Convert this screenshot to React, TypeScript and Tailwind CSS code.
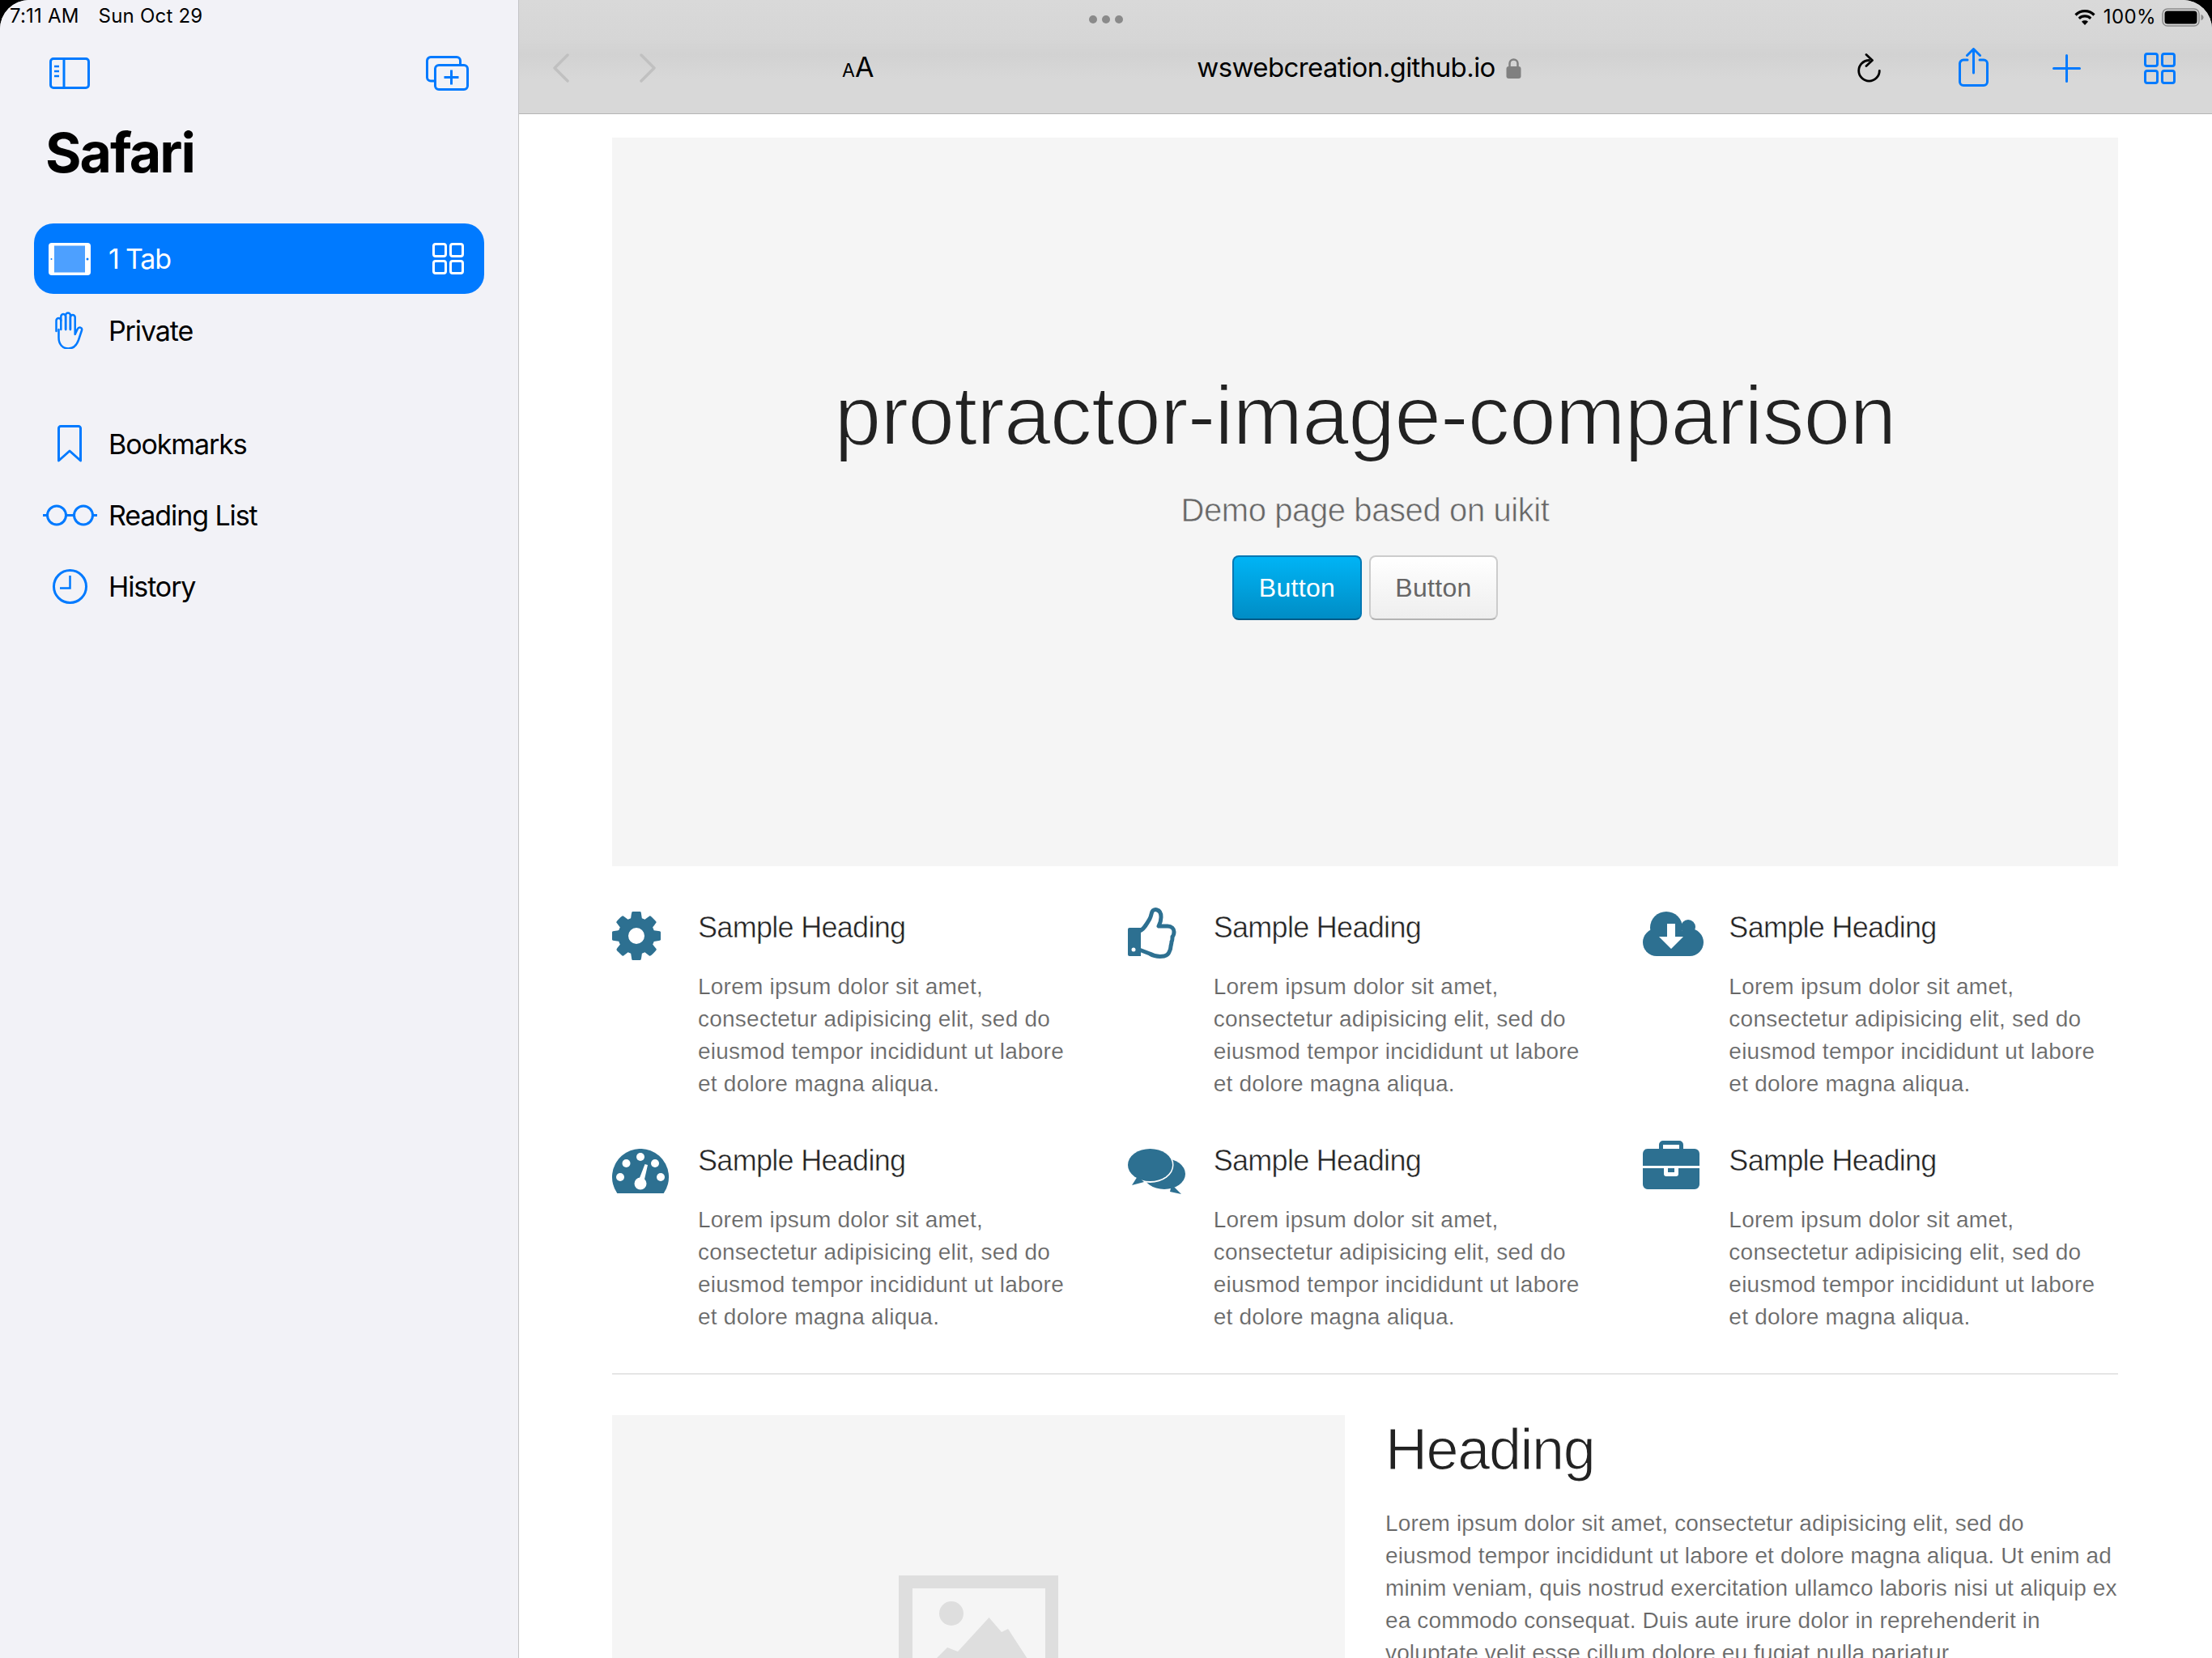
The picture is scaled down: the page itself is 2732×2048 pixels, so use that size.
const BLUE = "#007aff";

const sans = "[font-family:Inter,sans-serif]";

function TabsIcon({ className, color }: { className: string; color: string }) {
  return (
    <svg viewBox="0 0 39 39" className={className} fill="none" stroke={color} strokeWidth="3">
      <rect x="1.5" y="1.5" width="15" height="15" rx="2.5" />
      <rect x="22.5" y="1.5" width="15" height="15" rx="2.5" />
      <rect x="1.5" y="22.5" width="15" height="15" rx="2.5" />
      <rect x="22.5" y="22.5" width="15" height="15" rx="2.5" />
    </svg>
  );
}

function Sidebar() {
  return (
    <aside className={`w-[641px] shrink-0 bg-[#f2f2f7] border-r border-[#c4c4c6] flex flex-col ${sans}`}>
      <div className="h-[40px] pl-[12px] flex items-center gap-[24px] text-[24px] tracking-[0.2px] text-black leading-none">
        <span>7:11 AM</span>
        <span>Sun Oct 29</span>
      </div>
      <div className="h-[91px] flex items-start justify-between pl-[61px] pr-[61px] pt-[31px]">
        <svg viewBox="0 0 50 39" className="w-[50px] h-[39px]" fill="none" stroke={BLUE} strokeWidth="3">
          <rect x="1.5" y="1.5" width="47" height="36" rx="3.5" />
          <path d="M18 1.5v36" />
          <path d="M6 11h6M6 17h6M6 23h6" strokeWidth="2.5" />
        </svg>
        <svg viewBox="0 0 53 43" className="w-[53px] h-[43px] -mt-[2px]" fill="none" stroke={BLUE} strokeWidth="3">
          <path d="M10 31H6a4.500 4.500 0 0 1-4.500-4.500V6A4.500 4.500 0 0 1 6 1.500h32A4.500 4.500 0 0 1 42.500 6v4" />
          <rect x="11.500" y="11.500" width="40" height="30" rx="4.500" />
          <path d="M31.500 17.500v18M22.500 26.500h18" />
        </svg>
      </div>
      <h1 className="pl-[56px] h-[145px] text-[68px] font-bold leading-[90px] pt-[12px] tracking-[-2px] text-black">Safari</h1>
      <div className="mx-[42px] h-[87px] rounded-[24px] bg-[#007aff] flex items-center pl-[18px] pr-[25px] text-white text-[34px] tracking-[-1.2px]">
        <svg viewBox="0 0 52 40" className="w-[52px] h-[40px] shrink-0">
          <rect x="0" y="0" width="52" height="40" rx="4" fill="#fff" />
          <rect x="7" y="3.500" width="38" height="33" fill="#4da0ff" />
          <circle cx="48" cy="20" r="1.500" fill="#007aff" />
          <circle cx="3.500" cy="20" r="1" fill="#007aff" />
        </svg>
        <span className="ml-[22px] flex-1">1 Tab</span>
        <TabsIcon className="w-[39px] h-[39px]" color="#fff" />
      </div>
      <div className="mt-[1px]">
        <NavRow label="Private">
          <svg viewBox="0 0 36 46" className="w-[36px] h-[46px]" fill="none" stroke={BLUE} strokeWidth="2.500" strokeLinecap="round" strokeLinejoin="round">
            <path d="M1.500 24V11a2.900 2.900 0 0 1 5.800 0" />
            <path d="M7.300 22V6a2.900 2.900 0 0 1 5.800 0v16" />
            <path d="M13.100 22V4.400a2.900 2.900 0 0 1 5.800 0V22" />
            <path d="M18.900 22V7a2.900 2.900 0 0 1 5.800 0v21l3-6.500c1.800-3.500 6.300-2 5.300 1.500l-4 12c-2.500 7-6.500 10.500-12.500 10.500-7.500 0-12-5.500-12-13.500V22" />
          </svg>
        </NavRow>
      </div>
      <div className="mt-[52px]">
        <NavRow label="Bookmarks">
          <svg viewBox="0 0 30 46" className="w-[30px] h-[46px]" fill="none" stroke={BLUE} strokeWidth="3">
            <path d="M1.500 44V4a2.500 2.500 0 0 1 2.500-2.500h22a2.500 2.500 0 0 1 2.500 2.500v40L15 32z" strokeLinejoin="round" />
          </svg>
        </NavRow>
        <NavRow label="Reading List">
          <svg viewBox="0 0 67 27" className="w-[67px] h-[27px]" fill="none" stroke={BLUE} strokeWidth="3">
            <circle cx="17" cy="13.500" r="11.500" />
            <circle cx="50" cy="13.500" r="11.500" />
            <path d="M28.500 13.500h10M0 13.500h5.500M61.500 13.500H67" />
          </svg>
        </NavRow>
        <NavRow label="History">
          <svg viewBox="0 0 43 43" className="w-[43px] h-[43px]" fill="none" stroke={BLUE} strokeWidth="3">
            <circle cx="21.500" cy="21.500" r="20" />
            <path d="M21.500 8v15.500H9" strokeWidth="2.500" />
          </svg>
        </NavRow>
      </div>
    </aside>
  );
}

function NavRow({ label, children }: { label: string; children: React.ReactNode }) {
  return (
    <div className="h-[88px] ml-[42px] flex items-center text-[34px] tracking-[-1.1px] text-black">
      <div className="w-[88px] mr-[4px] flex justify-center">{children}</div>
      {label}
    </div>
  );
}

function Toolbar() {
  return (
    <header
      className={`h-[141px] shrink-0 border-b border-[#b4b4b4] bg-[linear-gradient(180deg,#d9d9d9_0%,#d6d6d6_35%,#d2d2d2_48%,#d8d8d8_70%,#d8d8d8_100%)] ${sans}`}
    >
      <div className="h-[48px] flex items-center relative">
        <div className="flex gap-[6px] pl-[704px]">
          <span className="w-[10px] h-[10px] rounded-full bg-[#8a8a8a]" />
          <span className="w-[10px] h-[10px] rounded-full bg-[#8a8a8a]" />
          <span className="w-[10px] h-[10px] rounded-full bg-[#8a8a8a]" />
        </div>
        <div className="absolute right-[10px] top-[9px] flex items-center text-[24px] tracking-[0.4px] leading-none text-black">
          <svg viewBox="0 0 26 20" className="w-[26px] h-[20px] mr-[10px]" fill="none" stroke="#000">
            <path d="M1.500 7.500C8 1 18 1 24.500 7.500" strokeWidth="3.200" />
            <path d="M5.800 11.800c4-3.800 10.400-3.800 14.400 0" strokeWidth="3.200" />
            <path d="M13 20l-4-4.300c2.200-1.800 5.800-1.800 8 0z" fill="#000" stroke="none" />
          </svg>
          <span>100%</span>
          <svg viewBox="0 0 52 23" className="w-[52px] h-[23px] ml-[7px]">
            <rect x="1" y="1" width="45" height="21" rx="6" fill="none" stroke="#8a8a8a" strokeWidth="1.500" />
            <rect x="3.500" y="3.500" width="40" height="16" rx="3.500" fill="#000" />
            <path d="M48.500 8v7c2-.5 3-2 3-3.500s-1-3-3-3.500z" fill="#8a8a8a" />
          </svg>
        </div>
      </div>
      <div className="h-[72px] flex items-center pl-[42px]">
        <svg viewBox="0 0 20 36" className="w-[20px] h-[36px]" fill="none" stroke="#c0c0c0" strokeWidth="3.500" strokeLinecap="round" strokeLinejoin="round">
          <path d="M18 2L2 18l16 16" />
        </svg>
        <svg viewBox="0 0 20 36" className="w-[20px] h-[36px] ml-[87px]" fill="none" stroke="#c0c0c0" strokeWidth="3.500" strokeLinecap="round" strokeLinejoin="round">
          <path d="M2 2l16 16L2 34" />
        </svg>
        <div className="ml-[230px] w-[40px] flex items-baseline text-black leading-none whitespace-nowrap mt-[-3px]">
          <span className="text-[23px]">A</span>
          <span className="text-[34px]">A</span>
        </div>
        <div className="ml-[398px] w-[369px] text-center text-[33px] tracking-[-0.6px] text-black whitespace-nowrap">wswebcreation.github.io</div>
        <svg viewBox="0 0 19 26" className="w-[19px] h-[26px] ml-[13px]">
          <path d="M4.500 12V7.500a5 5 0 0 1 10 0V12" fill="none" stroke="#808080" strokeWidth="2.500" />
          <rect x="0.500" y="11" width="18" height="15" rx="3" fill="#808080" />
        </svg>
        <svg viewBox="0 0 29 36" className="w-[29px] h-[36px] ml-[415px]" fill="none" stroke="#000" strokeWidth="2.800" strokeLinecap="round" strokeLinejoin="round">
          <path d="M14.500 8.500a12.800 12.800 0 1 0 12.800 12.800" />
          <path d="M11 1.500l7.500 7L11 15.500" />
        </svg>
        <svg viewBox="0 0 37 48" className="w-[37px] h-[48px] ml-[96px] mt-[-2px]" fill="none" stroke={BLUE} strokeWidth="3" strokeLinecap="round" strokeLinejoin="round">
          <path d="M11 15H6a4.500 4.500 0 0 0-4.500 4.500V42A4.500 4.500 0 0 0 6 46.500h25a4.500 4.500 0 0 0 4.500-4.500V19.500A4.500 4.500 0 0 0 31 15h-5" />
          <path d="M18.500 31V2M10.500 9.500l8-8 8 8" />
        </svg>
        <svg viewBox="0 0 35 35" className="w-[35px] h-[35px] ml-[79px]" fill="none" stroke={BLUE} strokeWidth="3" strokeLinecap="round">
          <path d="M17.500 1.500v32M1.500 17.500h32" />
        </svg>
        <TabsIcon className="w-[39px] h-[39px] ml-[78px]" color={BLUE} />
      </div>
    </header>
  );
}

const icons: { className: string; icon: React.ReactNode }[] = [
  {
    className: "mt-[6px]",
    icon: (
      <svg viewBox="0 0 1536 1536" className="w-[60px] h-[60px]" fill="#2d7091">
        <path d="M1024 768q0-106-75-181t-181-75-181 75-75 181 75 181 181 75 181-75 75-181zm512-109v222q0 12-8 23t-20 13l-185 28q-19 54-39 91 35 50 107 138 10 12 10 25t-9 23q-27 37-99 108t-94 71q-12 0-26-9l-138-108q-44 23-91 38-16 136-29 186-7 28-36 28h-222q-14 0-24.500-8.500t-11.500-21.500l-28-184q-49-16-90-37l-141 107q-10 9-25 9-14 0-25-11-126-114-165-168-7-10-7-23 0-12 8-23 15-21 51-66.500t54-70.500q-27-50-41-99l-183-27q-13-2-21-12.500t-8-23.500v-222q0-12 8-23t19-13l186-28q14-46 39-92-40-57-107-138-10-12-10-24 0-10 9-23 26-36 98.500-107.500t94.500-71.500q13 0 26 10l138 107q44-23 91-38 16-136 29-186 7-28 36-28h222q14 0 24.500 8.500t11.500 21.500l28 184q49 16 90 37l142-107q9-9 24-9 13 0 25 10 129 119 165 170 7 8 7 22 0 12-8 23-15 21-51 66.500t-54 70.500q26 50 41 98l183 28q13 2 21 12.500t8 23.500z" />
      </svg>
    ),
  },
  {
    className: "mt-[1px]",
    icon: (
      <svg viewBox="0 0 60 65" className="w-[60px] h-[65px]">
        <path d="M2 25h14v35H2a2 2 0 0 1-2-2V27a2 2 0 0 1 2-2z" fill="#2d7091" />
        <circle cx="7" cy="52" r="2.500" fill="#fff" />
        <path
          d="M14 29c5-1 9-8 13-15 2-4 2-7 3-9 1-2 4-3 6-2 4 1 5 5 5 9 0 4-2 9-3 11h11c5 0 8 3 8 7 0 3-1 5-2 6 0 3 0 5-1 6 0 3-1 5-1 6 0 3-1 5-2 7-1 3-3 4-6 5-6 1-13 0-18-3l-13-5"
          fill="none"
          stroke="#2d7091"
          strokeWidth="5"
          strokeLinejoin="round"
        />
      </svg>
    ),
  },
  {
    className: "mt-[6px]",
    icon: (
      <svg viewBox="0 0 75 55" className="w-[75px] h-[55px]" fill="#2d7091">
        <circle cx="29" cy="20" r="20" />
        <circle cx="56" cy="19" r="9" />
        <circle cx="17" cy="38" r="17" />
        <circle cx="58" cy="38" r="17" />
        <rect x="17" y="25" width="41" height="30" />
        <path d="M30 15h10v16h10L35 46 20 31h10z" fill="#fff" />
      </svg>
    ),
  },
  {
    className: "mt-[11px]",
    icon: (
      <svg viewBox="0 0 70 55" className="w-[70px] h-[55px]">
        <path d="M6.300 55A35 35 0 1 1 63.700 55z" fill="#2d7091" />
        <g fill="#fff">
          <circle cx="35" cy="10" r="5" />
          <circle cx="17.500" cy="18" r="5" />
          <circle cx="53" cy="18" r="5" />
          <circle cx="10" cy="35" r="5" />
          <circle cx="60" cy="35" r="5" />
          <ellipse cx="35" cy="43" rx="7.500" ry="7.500" />
          <path d="M40.500 19l3.500 1-5 22-7-1z" />
        </g>
      </svg>
    ),
  },
  {
    className: "mt-[11px]",
    icon: (
      <svg viewBox="0 0 71 56" className="w-[71px] h-[56px]" fill="#2d7091">
        <ellipse cx="45" cy="31" rx="26" ry="19" />
        <path d="M54 44l12 12-14-3z" />
        <ellipse cx="27.500" cy="20" rx="29" ry="22" fill="#fff" />
        <ellipse cx="27.500" cy="20" rx="27.500" ry="20" />
        <path d="M12 34l-7 11 15-4z" />
      </svg>
    ),
  },
  {
    className: "mt-[1px]",
    icon: (
      <svg viewBox="0 0 70 60" className="w-[70px] h-[60px]">
        <path
          d="M20 10V5a5 5 0 0 1 5-5h20a5 5 0 0 1 5 5v5h14a6 6 0 0 1 6 6v15H0V16a6 6 0 0 1 6-6zm5 0h20V5H25z"
          fill="#2d7091"
          fillRule="evenodd"
        />
        <path d="M0 34h26v7a3 3 0 0 0 3 3h12a3 3 0 0 0 3-3v-7h26v20a6 6 0 0 1-6 6H6a6 6 0 0 1-6-6z" fill="#2d7091" />
        <rect x="31" y="34" width="8" height="5" fill="#2d7091" />
      </svg>
    ),
  },
];

function Feature({ className, icon }: { className: string; icon: React.ReactNode }) {
  return (
    <div className="flex">
      <div className={`w-[106px] shrink-0 ${className}`}>{icon}</div>
      <div>
        <h3 className="text-[36px] leading-[48px] text-[#222] tracking-[-0.7px] pt-[2px] mb-[29px] [-webkit-text-stroke:0.5px_#fff]">Sample Heading</h3>
        <p className="max-w-[470px]">Lorem ipsum dolor sit amet, consectetur adipisicing elit, sed do eiusmod tempor incididunt ut labore et dolore magna aliqua.</p>
      </div>
    </div>
  );
}

export default function App() {
  return (
    <div className="w-[2732px] h-[2048px] bg-black overflow-hidden">
      <div className="w-full h-full rounded-t-[36px] overflow-hidden flex bg-white">
        <Sidebar />
        <main className="flex-1 flex flex-col min-w-0">
          <Toolbar />
          <div className="pl-[115px] pr-[116px] pt-[29px] overflow-hidden text-[28px] leading-[40px] text-[#666] [font-family:'Liberation_Sans',sans-serif] tracking-[0.24px] [-webkit-text-stroke:0.2px_#fff]">
            <section className="h-[900px] bg-[#f5f5f5] flex flex-col items-center pt-[273px]">
              <h1 className="text-[104px] leading-[140px] text-[#222] tracking-[-0.9px] whitespace-nowrap [-webkit-text-stroke:2px_#f5f5f5]">protractor-image-comparison</h1>
              <p className="text-[40px] leading-[56px] mt-[19px] text-[#666] tracking-[-0.4px] [-webkit-text-stroke:0.6px_#f5f5f5]">Demo page based on uikit</p>
              <div className="flex gap-[9px] mt-[28px] text-[32px] tracking-[0.3px] [-webkit-text-stroke:0px_transparent]">
                <button className="w-[160px] h-[80px] rounded-[8px] border-2 border-[#0077b3] border-b-[#005a87] bg-[linear-gradient(180deg,#00b4f5,#008dc5)] text-white">
                  Button
                </button>
                <button className="w-[159px] h-[80px] rounded-[8px] border-2 border-[#cccccc] border-b-[#b3b3b3] bg-[linear-gradient(180deg,#ffffff,#eeeeee)] text-[#666]">
                  Button
                </button>
              </div>
            </section>
            <section className="grid grid-cols-3 gap-x-[50px] gap-y-[49px] mt-[50px]">
              {icons.map((item, i) => (
                <Feature key={i} className={item.className} icon={item.icon} />
              ))}
            </section>
            <hr className="mt-[49px] mb-[50px] border-0 border-t-2 border-[#e5e5e5]" />
            <section className="grid grid-cols-2 gap-x-[50px]">
              <div className="h-[553px] bg-[#f5f5f5] flex items-center justify-center">
                <svg viewBox="0 0 197 158" className="w-[197px] h-[158px]">
                  <path d="M0 0h197v158H0zM17 16v126h164V16z" fill="#dedede" fillRule="evenodd" />
                  <ellipse cx="65" cy="47" rx="15" ry="15" fill="#dedede" />
                  <path d="M30 128l16-25 14-14 13 5 38.500-42L127 70l8-4 24 37 16 25z" fill="#dedede" />
                </svg>
              </div>
              <div>
                <h2 className="text-[72px] leading-[84px] text-[#222] tracking-[-1.4px] mb-[30px] [-webkit-text-stroke:1.2px_#fff]">Heading</h2>
                <p className="whitespace-nowrap tracking-[0.14px]">
                  Lorem ipsum dolor sit amet, consectetur adipisicing elit, sed do
                  <br />
                  eiusmod tempor incididunt ut labore et dolore magna aliqua. Ut enim ad
                  <br />
                  minim veniam, quis nostrud exercitation ullamco laboris nisi ut aliquip ex
                  <br />
                  ea commodo consequat. Duis aute irure dolor in reprehenderit in
                  <br />
                  voluptate velit esse cillum dolore eu fugiat nulla pariatur.
                </p>
              </div>
            </section>
          </div>
        </main>
      </div>
    </div>
  );
}
